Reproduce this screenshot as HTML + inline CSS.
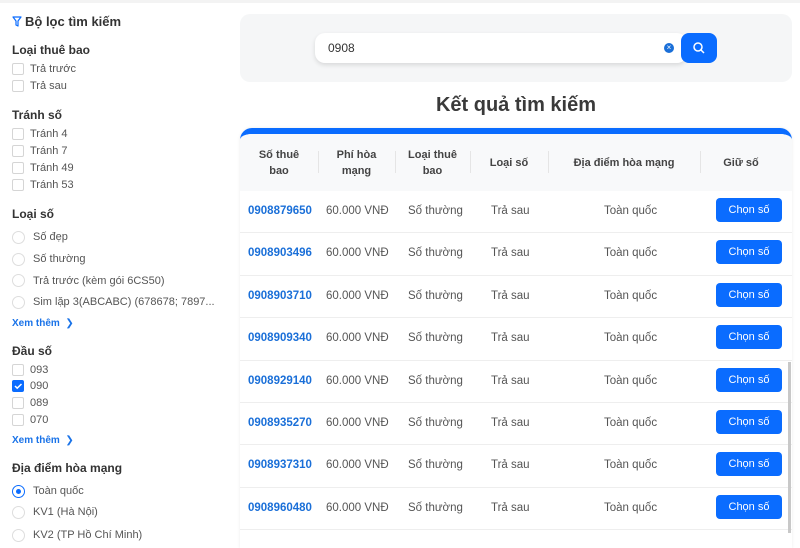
<!DOCTYPE html>
<html><head><meta charset="utf-8"><style>
*{box-sizing:border-box;margin:0;padding:0}
body{width:800px;height:533px;overflow:hidden;background:#fff;font-family:"Liberation Sans",sans-serif;color:#333;position:relative}
.topline{position:absolute;left:0;top:0;width:800px;height:3px;background:#f3f3f3}
.side{position:absolute;left:0;top:0;width:230px}
.a{position:absolute;white-space:nowrap}
.h{font-size:12px;font-weight:bold;color:#333;left:12px}
.cb{position:absolute;left:12px;width:12px;height:12px;border:1px solid #d5d5d5;border-radius:2px;background:#fff}
.cb.on{background:#0a6cff;border-color:#0a6cff}
.rd{position:absolute;left:12px;width:13px;height:13px;border:1px solid #ddd;border-radius:50%}
.rd.on{border-color:#0a6cff}
.rd.on::after{content:"";position:absolute;left:3px;top:3px;width:5px;height:5px;border-radius:50%;background:#0a6cff}
.t{font-size:11px;color:#555}
.more{font-size:10px;font-weight:bold;color:#1a73e8;left:12px}
.panel{position:absolute;left:240px;top:14px;width:552px;height:68px;background:#f5f6f7;border-radius:10px}
.inp{position:absolute;left:315px;top:33px;width:372px;height:30px;background:#fff;border-radius:10px;box-shadow:0 2px 5px rgba(0,0,0,.12);font-size:12px;padding:8px 0 0 13px;color:#333}
.btn{position:absolute;left:681px;top:33px;width:36px;height:30px;background:#0a6cff;border-radius:8px}
.title{position:absolute;left:240px;width:552px;top:94px;text-align:center;font-size:20px;font-weight:bold;color:#3a3a3a}
.tbl{position:absolute;left:240px;top:128px;width:552px;height:420px;border-top:6px solid #0a6cff;border-radius:12px 12px 0 0;background:#fff;overflow:hidden;box-shadow:0 0 3px rgba(0,0,0,.08)}
.hd{position:absolute;left:0;top:0;width:552px;height:57px;background:#f8f9fa}
.hc{position:absolute;top:0;height:57px;display:flex;align-items:center;justify-content:center;text-align:center;font-size:11px;font-weight:bold;color:#444;line-height:16px}
.sep{position:absolute;top:17px;width:1px;height:22px;background:#e5e5e5}
.row{position:absolute;left:0;width:552px;height:42.4px;border-bottom:1px solid #eee;font-size:11.5px;color:#555}
.row span{position:absolute;top:14px;white-space:nowrap}
.num{color:#1a6fd8;font-weight:bold}
.ch{position:absolute;left:476px;top:7px;width:66px;height:24px;background:#0a6cff;border-radius:4px;color:#fff;font-size:11px;text-align:center;line-height:24px}
.sb{position:absolute;left:788px;top:362px;width:3px;height:171px;background:#c8c8c8}
</style></head><body>
<div class="topline"></div>
<div class="side">
<svg class="a" style="left:12px;top:16px" width="10" height="11" viewBox="0 0 10 11"><path d="M1 1h8L6 5v5L4 9V5z" fill="none" stroke="#0a6cff" stroke-width="1.2" stroke-linejoin="round"/></svg>
<div class="a" style="left:25px;top:14px;font-size:13px;font-weight:bold;color:#333">Bộ lọc tìm kiếm</div>
<div class="a h" style="top:43px">Loại thuê bao</div>
<div class="cb" style="top:63px"></div><div class="a t" style="left:30px;top:63px">Trả trước</div>
<div class="cb" style="top:80px"></div><div class="a t" style="left:30px;top:80px">Trả sau</div>
<div class="a h" style="top:108px">Tránh số</div>
<div class="cb" style="top:128px"></div><div class="a t" style="left:30px;top:128px">Tránh 4</div>
<div class="cb" style="top:145px"></div><div class="a t" style="left:30px;top:145px">Tránh 7</div>
<div class="cb" style="top:162px"></div><div class="a t" style="left:30px;top:162px">Tránh 49</div>
<div class="cb" style="top:179px"></div><div class="a t" style="left:30px;top:179px">Tránh 53</div>
<div class="a h" style="top:207px">Loại số</div>
<div class="rd" style="top:231px"></div><div class="a t" style="left:33px;top:231px">Số đẹp</div>
<div class="rd" style="top:253px"></div><div class="a t" style="left:33px;top:253px">Số thường</div>
<div class="rd" style="top:274px"></div><div class="a t" style="left:33px;top:275px">Trả trước (kèm gói 6CS50)</div>
<div class="rd" style="top:296px"></div><div class="a t" style="left:33px;top:296px">Sim lặp 3(ABCABC) (678678; 7897...</div>
<div class="a more" style="top:318px">Xem thêm &nbsp;<span style="font-weight:normal">&#10095;</span></div>
<div class="a h" style="top:344px">Đầu số</div>
<div class="cb" style="top:364px"></div><div class="a t" style="left:30px;top:364px">093</div>
<div class="cb on" style="top:380px"><svg width="10" height="10" style="position:absolute;left:0;top:0"><path d="M2 5l2.2 2.2L8.5 3" stroke="#fff" stroke-width="1.5" fill="none"/></svg></div><div class="a t" style="left:30px;top:380px">090</div>
<div class="cb" style="top:397px"></div><div class="a t" style="left:30px;top:397px">089</div>
<div class="cb" style="top:414px"></div><div class="a t" style="left:30px;top:414px">070</div>
<div class="a more" style="top:435px">Xem thêm &nbsp;<span style="font-weight:normal">&#10095;</span></div>
<div class="a h" style="top:461px">Địa điểm hòa mạng</div>
<div class="rd on" style="top:485px"></div><div class="a t" style="left:33px;top:485px">Toàn quốc</div>
<div class="rd" style="top:506px"></div><div class="a t" style="left:33px;top:506px">KV1 (Hà Nội)</div>
<div class="rd" style="top:529px"></div><div class="a t" style="left:33px;top:529px">KV2 (TP Hồ Chí Minh)</div>
</div>
<div class="panel"></div>
<div class="inp">0908</div>
<div class="a" style="left:664px;top:43px;width:10px;height:10px;border-radius:50%;background:#1a6fd8;color:#fff;font-size:8px;text-align:center;line-height:10px">×</div>
<div class="btn"><svg width="36" height="30"><circle cx="17" cy="14" r="4" fill="none" stroke="#fff" stroke-width="1.5"/><path d="M20 17l3 3" stroke="#fff" stroke-width="1.5"/></svg></div>
<div class="title">Kết quả tìm kiếm</div>
<div class="tbl">
<div class="hd"></div>
<div class="hc" style="left:0;width:78px">Số thuê<br>bao</div>
<div class="hc" style="left:78px;width:77px">Phí hòa<br>mạng</div>
<div class="hc" style="left:155px;width:75px">Loại thuê<br>bao</div>
<div class="hc" style="left:230px;width:78px">Loại số</div>
<div class="hc" style="left:308px;width:152px">Địa điểm hòa mạng</div>
<div class="hc" style="left:460px;width:82px">Giữ số</div>
<div class="sep" style="left:78px"></div><div class="sep" style="left:155px"></div><div class="sep" style="left:230px"></div><div class="sep" style="left:308px"></div><div class="sep" style="left:460px"></div>
<div class="row" style="top:57px"><span class="num" style="left:8px">0908879650</span><span style="left:86px">60.000 VNĐ</span><span style="left:168px">Số thường</span><span style="left:251px">Trả sau</span><span style="left:364px">Toàn quốc</span><div class="ch">Chọn số</div></div>
<div class="row" style="top:99.4px"><span class="num" style="left:8px">0908903496</span><span style="left:86px">60.000 VNĐ</span><span style="left:168px">Số thường</span><span style="left:251px">Trả sau</span><span style="left:364px">Toàn quốc</span><div class="ch">Chọn số</div></div>
<div class="row" style="top:141.8px"><span class="num" style="left:8px">0908903710</span><span style="left:86px">60.000 VNĐ</span><span style="left:168px">Số thường</span><span style="left:251px">Trả sau</span><span style="left:364px">Toàn quốc</span><div class="ch">Chọn số</div></div>
<div class="row" style="top:184.2px"><span class="num" style="left:8px">0908909340</span><span style="left:86px">60.000 VNĐ</span><span style="left:168px">Số thường</span><span style="left:251px">Trả sau</span><span style="left:364px">Toàn quốc</span><div class="ch">Chọn số</div></div>
<div class="row" style="top:226.6px"><span class="num" style="left:8px">0908929140</span><span style="left:86px">60.000 VNĐ</span><span style="left:168px">Số thường</span><span style="left:251px">Trả sau</span><span style="left:364px">Toàn quốc</span><div class="ch">Chọn số</div></div>
<div class="row" style="top:269px"><span class="num" style="left:8px">0908935270</span><span style="left:86px">60.000 VNĐ</span><span style="left:168px">Số thường</span><span style="left:251px">Trả sau</span><span style="left:364px">Toàn quốc</span><div class="ch">Chọn số</div></div>
<div class="row" style="top:311.4px"><span class="num" style="left:8px">0908937310</span><span style="left:86px">60.000 VNĐ</span><span style="left:168px">Số thường</span><span style="left:251px">Trả sau</span><span style="left:364px">Toàn quốc</span><div class="ch">Chọn số</div></div>
<div class="row" style="top:353.8px"><span class="num" style="left:8px">0908960480</span><span style="left:86px">60.000 VNĐ</span><span style="left:168px">Số thường</span><span style="left:251px">Trả sau</span><span style="left:364px">Toàn quốc</span><div class="ch">Chọn số</div></div>
</div>
<div class="sb"></div>
</body></html>
